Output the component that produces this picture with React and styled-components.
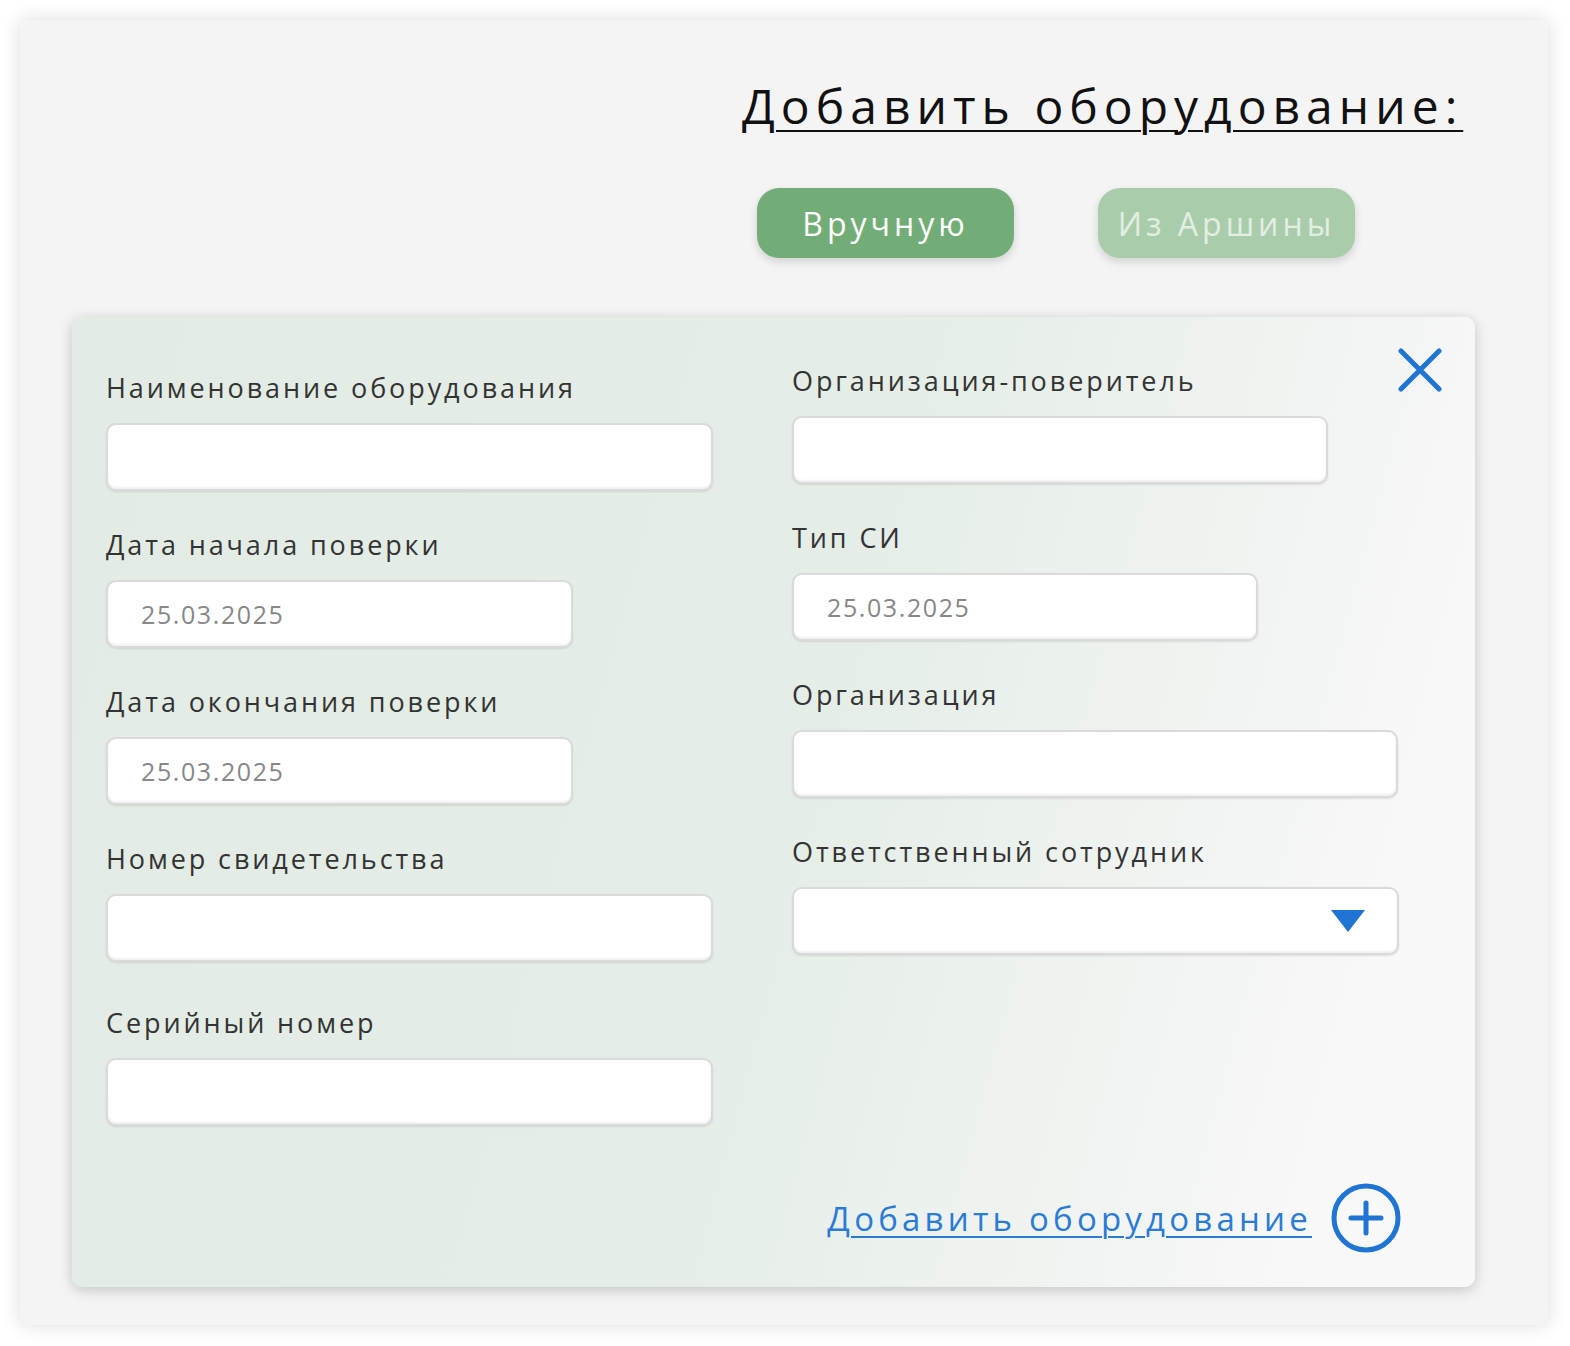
import React from "react";
import styled, { createGlobalStyle } from "styled-components";

const GlobalStyle = createGlobalStyle`
  body {
    margin: 0;
    background: #ffffff;
    font-family: "Open Sans", "Liberation Sans", sans-serif;
  }
`;

const Page = styled.div`
  padding: 20px 22px 21px 20px;
`;

const Panel = styled.div`
  width: 1528px;
  height: 1305px;
  box-sizing: border-box;
  background: #f4f4f4;
  box-shadow: 0 0 18px rgba(0, 0, 0, 0.14);
  padding-top: 56px;
  display: flex;
  flex-direction: column;
`;

const Header = styled.div`
  padding-left: 722px;
  display: flex;
  flex-direction: column;
`;

const Title = styled.h1`
  margin: 0;
  font-size: 48px;
  line-height: 60px;
  font-weight: 400;
  letter-spacing: 6px;
  color: #111;
  text-decoration: underline;
  text-decoration-thickness: 2px;
  text-underline-offset: 6px;
`;

const ModeRow = styled.div`
  display: flex;
  gap: 84px;
  margin: 52px 0 0 15px;
`;

const ModeButton = styled.button`
  width: 257px;
  height: 70px;
  border: none;
  border-radius: 22px;
  background: ${(p) => (p.$active ? "#72ad77" : "#a9cdab")};
  color: ${(p) => (p.$active ? "#ffffff" : "#e3eee3")};
  font-family: inherit;
  font-size: 32px;
  letter-spacing: 4px;
  box-shadow: 0 4px 8px rgba(0, 0, 0, 0.14);
  cursor: pointer;
`;

const Card = styled.div`
  position: relative;
  margin: 59px 0 0 52px;
  width: 1403px;
  height: 970px;
  box-sizing: border-box;
  border-radius: 10px;
  background: linear-gradient(105deg, #e2ece4 0%, #e4ede6 50%, #f8f8f8 90%);
  box-shadow: 0 3px 14px rgba(0, 0, 0, 0.2);
  display: flex;
  flex-direction: column;
`;

const Columns = styled.div`
  display: grid;
  grid-template-columns: 686px 1fr;
  padding-left: 34px;
`;

const Column = styled.div`
  display: flex;
  flex-direction: column;
  gap: 37px;
  padding-top: ${(p) => p.$top}px;
`;

const Field = styled.div`
  display: flex;
  flex-direction: column;
  gap: 18px;
  margin-top: ${(p) => p.$mt || 0}px;
`;

const Label = styled.label`
  font-size: 27px;
  line-height: 34px;
  letter-spacing: 2.9px;
  color: #333;
`;

const Input = styled.div`
  position: relative;
  width: ${(p) => p.$w}px;
  height: 68px;
  box-sizing: border-box;
  background: #fff;
  border: 2px solid #dadada;
  border-radius: 10px;
  box-shadow: inset 0 -2px 2px rgba(0, 0, 0, 0.06), 0 1px 2px rgba(0, 0, 0, 0.1);
  display: flex;
  align-items: center;
  padding-left: 33px;
  font-size: 25px;
  letter-spacing: 1.6px;
  color: #878787;
`;

const Arrow = styled.svg`
  position: absolute;
  right: 31px;
  top: 20px;
`;

const CloseButton = styled.button`
  position: absolute;
  top: 31px;
  right: 33px;
  width: 44px;
  height: 44px;
  padding: 0;
  border: none;
  background: none;
  cursor: pointer;
`;

const Footer = styled.div`
  margin-top: auto;
  display: flex;
  justify-content: flex-end;
  align-items: center;
  gap: 19px;
  padding: 0 74px 34px 0;
`;

const AddLink = styled.a`
  font-size: 33px;
  letter-spacing: 4.2px;
  color: #2a7bd6;
  text-decoration: underline;
  text-decoration-thickness: 2px;
  text-underline-offset: 5px;
  cursor: pointer;
`;

const leftFields = [
  { label: "Наименование оборудования", w: 607 },
  { label: "Дата начала поверки", w: 467, value: "25.03.2025" },
  { label: "Дата окончания поверки", w: 467, value: "25.03.2025" },
  { label: "Номер свидетельства", w: 607 },
  { label: "Серийный номер", w: 607, mt: 7 },
];

const rightFields = [
  { label: "Организация-поверитель", w: 536 },
  { label: "Тип СИ", w: 466, value: "25.03.2025" },
  { label: "Организация", w: 606 },
  { label: "Ответственный сотрудник", w: 607, select: true },
];

const FormField = ({ label, w, value, select, mt }) => (
  <Field $mt={mt}>
    <Label>{label}</Label>
    <Input $w={w}>
      {value}
      {select && (
        <Arrow width="36" height="24" viewBox="0 0 36 24">
          <path d="M1 1 H35 L18 23 Z" fill="#1f74d4" />
        </Arrow>
      )}
    </Input>
  </Field>
);

export default function App() {
  return (
    <>
      <GlobalStyle />
      <Page>
        <Panel>
          <Header>
            <Title>Добавить оборудование:</Title>
            <ModeRow>
              <ModeButton $active>Вручную</ModeButton>
              <ModeButton>Из Аршины</ModeButton>
            </ModeRow>
          </Header>

          <Card>
            <CloseButton>
              <svg width="44" height="44" viewBox="0 0 44 44">
                <path
                  d="M3 3 L41 41 M41 3 L3 41"
                  stroke="#1f74d4"
                  strokeWidth="5"
                  strokeLinecap="round"
                />
              </svg>
            </CloseButton>

            <Columns>
              <Column $top={54}>
                {leftFields.map((f) => (
                  <FormField key={f.label} {...f} />
                ))}
              </Column>
              <Column $top={47}>
                {rightFields.map((f) => (
                  <FormField key={f.label} {...f} />
                ))}
              </Column>
            </Columns>

            <Footer>
              <AddLink>Добавить оборудование</AddLink>
              <svg width="70" height="70" viewBox="0 0 70 70">
                <circle cx="35" cy="35" r="32" fill="none" stroke="#1f74d4" strokeWidth="5" />
                <path
                  d="M35 20 V50 M20 35 H50"
                  stroke="#1f74d4"
                  strokeWidth="5"
                  strokeLinecap="round"
                />
              </svg>
            </Footer>
          </Card>
        </Panel>
      </Page>
    </>
  );
}
